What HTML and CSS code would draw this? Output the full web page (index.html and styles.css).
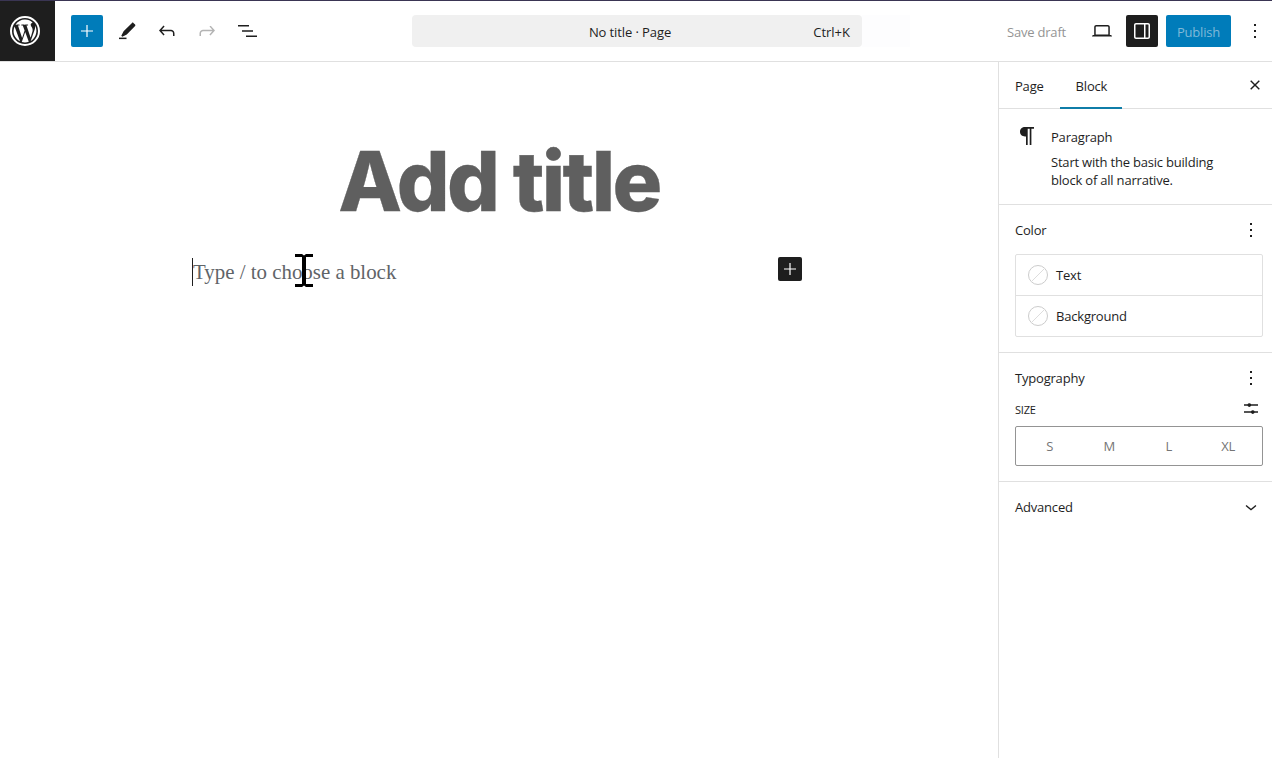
FILE: index.html
```html
<!DOCTYPE html>
<html lang="en">
<head>
    <meta charset="UTF-8">
    <meta name="viewport" content="width=device-width, initial-scale=1.0">
    <title>Add title</title>
    <link rel="stylesheet" href="styles.css">
</head>
<body>
<div class="topline"></div>
<header class="header">
    <a class="wp-logo">
        <svg width="36" height="36" viewBox="0 0 36 36"><circle cx="18" cy="18" r="14" fill="none" stroke="#fff" stroke-width="2"/><path fill="#fff" d="M6.600 18c0 4.500 2.600 8.400 6.400 10.200L7.600 13.400C7 14.800 6.600 16.400 6.600 18zM25.700 17.400c0-1.400-.5-2.400-.9-3.100-.6-.9-1.100-1.700-1.100-2.600 0-1 .8-2 1.900-2h.1C23.700 7.800 21 6.600 18 6.600c-4 0-7.500 2-9.500 5.100h.7c1.200 0 3-.1 3-.1.600 0 .7.900.1.900 0 0-.6.100-1.300.1l4.100 12.300 2.500-7.500-1.800-4.800c-.6 0-1.200-.1-1.200-.1-.6 0-.5-.9.100-.9 0 0 1.900.1 3 .1 1.200 0 3-.1 3-.1.600 0 .7.900.1.900 0 0-.6.100-1.300.1l4.100 12.200 1.100-3.800c.5-1.600.9-2.700.9-3.700zM18.200 19l-3.400 9.900c1 .3 2.100.5 3.200.5 1.300 0 2.600-.2 3.800-.7l-.1-.2L18.200 19zM28 12.600c.1.400.1.800.1 1.200 0 1.200-.2 2.500-.9 4.100l-3.500 10.100c3.400-2 5.700-5.700 5.700-10 0-2-.5-3.800-1.400-5.400z"/></svg>
    </a>
    <div class="tools">
        <button class="icon-btn inserter" type="button">
            <svg width="24" height="24" viewBox="0 0 24 24"><path fill="#fff" d="M11.400 6h1.200v5.400H18v1.200h-5.400V18h-1.200v-5.400H6v-1.200h5.400z"/></svg>
        </button>
        <button class="icon-btn" type="button">
            <svg width="24" height="24" viewBox="0 0 24 24"><path fill="#1e1e1e" d="M20.100 5.600 18.400 3.900c-.4-.4-1-.4-1.400 0L8.600 12.300l-2.300 4.500 1 1 4.500-2.300 8.300-8.500c.4-.4.400-1 0-1.400z"/><rect x="4" y="18.600" width="7.500" height="1.500" fill="#1e1e1e"/></svg>
        </button>
        <button class="icon-btn" type="button">
            <svg width="24" height="24" viewBox="0 0 24 24"><path fill="#1e1e1e" d="M18.300 11.700c-.6-.6-1.400-.9-2.300-.9H6.700l2.900-3.300-1.100-1-4.500 5 4.500 5 1.100-1-2.900-3.300H16c.5 0 .9.200 1.300.5.700.6.700 1.200.7 2.500v1.700h1.500v-1.700c0-1.300 0-2.400-1.200-3.500z"/></svg>
        </button>
        <button class="icon-btn" type="button">
            <svg width="24" height="24" viewBox="0 0 24 24"><path fill="#b4b4b4" d="M15.600 6.500l-1.100 1 2.900 3.300H8c-.9 0-1.700.3-2.300.9-1.200 1.100-1.200 2.200-1.200 3.500v1.700H6v-1.700c0-1.300 0-1.900.7-2.500.4-.3.800-.5 1.300-.5h9.300l-2.900 3.300 1.100 1 4.500-5-4.500-5z"/></svg>
        </button>
        <button class="icon-btn" type="button">
            <svg width="24" height="24" viewBox="0 0 24 24"><path fill="#1e1e1e" d="M3 6h11v1.500H3zM7 11.300h11v1.500H7zM11 16.500h11V18H11z"/></svg>
        </button>
    </div>
    <div class="center">
        <div class="command-bar">
            <span class="command-title">No title · Page</span>
            <span class="command-key">Ctrl+K</span>
        </div>
        <div class="command-ghost"></div>
    </div>
    <div class="actions">
        <span class="save-draft">Save draft</span>
        <button class="icon-btn" type="button">
            <svg width="24" height="24" viewBox="0 0 24 24"><path fill="#1e1e1e" d="M20.500 16h-.7V8c0-1.100-.9-2-2-2H6.200c-1.100 0-2 .9-2 2v8h-.7c-.8 0-1.500.7-1.500 1.500h20c0-.8-.7-1.500-1.500-1.500zM5.700 8c0-.3.200-.5.500-.5h11.600c.3 0 .5.200.5.500v7.600H5.700V8z"/></svg>
        </button>
        <button class="icon-btn dark" type="button">
            <svg width="24" height="24" viewBox="0 0 24 24"><path fill="#fff" d="M18 4H6c-1.100 0-2 .9-2 2v12c0 1.100.9 2 2 2h12c1.100 0 2-.9 2-2V6c0-1.100-.9-2-2-2zM6 18.500c-.3 0-.5-.2-.5-.5V6c0-.3.200-.5.500-.5h8v13H6zM18.500 18c0 .3-.2.500-.5.500h-2.500v-13H18c.3 0 .5.200.5.500v12z"/></svg>
        </button>
        <button class="publish" type="button">Publish</button>
        <button class="icon-btn more" type="button">
            <svg width="24" height="24" viewBox="0 0 24 24"><path fill="#1e1e1e" d="M13 19h-2v-2h2v2zm0-6h-2v-2h2v2zm0-6h-2V5h2v2z"/></svg>
        </button>
    </div>
</header>
<div class="main">
    <main class="editor">
        <h1 class="post-title">Add title</h1>
        <div class="block-row">
            <p class="placeholder">Type / to choose a block</p>
            <button class="block-add" type="button">
                <svg width="24" height="24" viewBox="0 0 24 24"><path fill="#fff" d="M11.400 6h1.200v5.400H18v1.200h-5.400V18h-1.200v-5.400H6v-1.200h5.400z"/></svg>
            </button>
            <svg class="ibeam" width="20" height="33" viewBox="0 0 20 33"><path fill="#000" d="M1 0h7l2 1.500L12 0h7v3h-7v27h7v3h-7l-2-1.500L8 33H1v-3h7V3H1z"/></svg>
        </div>
    </main>
    <aside class="sidebar">
        <div class="tabs">
            <span class="tab">Page</span>
            <span class="tab active">Block</span>
            <svg class="tabs-close" width="24" height="24" viewBox="0 0 24 24"><path fill="#1e1e1e" d="M13 12l3.800-3.800-1-1-3.800 3.800-3.800-3.800-1 1 3.800 3.800-3.800 3.800 1 1 3.800-3.800 3.800 3.800 1-1z"/></svg>
        </div>
        <section class="block-card">
            <svg class="block-icon" width="24" height="24" viewBox="0 0 24 24"><path fill="#1e1e1e" d="M19 3h-9C7.200 3 5 5 5 7.800s2.200 4.700 5 4.700h1V21h1.700V4.800h2V21h1.700V4.800H19z"/></svg>
            <div class="block-text">
                <div class="block-name">Paragraph</div>
                <div class="block-desc">Start with the basic building block of all narrative.</div>
            </div>
        </section>
        <section class="panel color-panel">
            <div class="panel-head">
                <span>Color</span>
                <svg width="24" height="24" viewBox="0 0 24 24"><path fill="#1e1e1e" d="M13 19h-2v-2h2v2zm0-6h-2v-2h2v2zm0-6h-2V5h2v2z"/></svg>
            </div>
            <div class="color-list">
                <div class="color-row">
                    <svg width="22" height="22" viewBox="0 0 22 22"><circle cx="11" cy="11" r="9.500" fill="#fff" stroke="#ccc"/><path d="M4.500 17.500l13-13" stroke="#ddd"/></svg>
                    <span>Text</span>
                </div>
                <div class="color-row">
                    <svg width="22" height="22" viewBox="0 0 22 22"><circle cx="11" cy="11" r="9.500" fill="#fff" stroke="#ccc"/><path d="M4.500 17.500l13-13" stroke="#ddd"/></svg>
                    <span>Background</span>
                </div>
            </div>
        </section>
        <section class="panel type-panel">
            <div class="panel-head">
                <span>Typography</span>
                <svg width="24" height="24" viewBox="0 0 24 24"><path fill="#1e1e1e" d="M13 19h-2v-2h2v2zm0-6h-2v-2h2v2zm0-6h-2V5h2v2z"/></svg>
            </div>
            <div class="size-head">
                <span>SIZE</span>
                <svg width="24" height="24" viewBox="0 0 24 24"><path fill="#1e1e1e" d="M5 7.300h3.500a2 2 0 0 1 3.600 0H19v1.500h-6.900a2 2 0 0 1-3.600 0H5zM5 14.300h7a2 2 0 0 1 3.600 0H19v1.500h-3.400a2 2 0 0 1-3.600 0H5z"/></svg>
            </div>
            <div class="size-toggle">
                <span>S</span><span>M</span><span>L</span><span>XL</span>
            </div>
        </section>
        <section class="panel advanced">
            <span>Advanced</span>
            <svg width="24" height="24" viewBox="0 0 24 24"><path fill="#1e1e1e" d="M16.500 10l-4.500 3.800L7.500 10l-.9 1.100 5.400 4.500 5.400-4.500z"/></svg>
        </section>
    </aside>
</div>
</body>
</html>
```

FILE: styles.css
```css
* { box-sizing: border-box; }
html, body { height: 100%; }
body {
    margin: 0;
    background-color: #fff;
    color: #1e1e1e;
    font-family: "Open Sans", Arial, sans-serif;
    font-size: 13px;
    letter-spacing: -0.2px;
    overflow: hidden;
}
button {
    border: none;
    background: none;
    padding: 0;
    font-family: inherit;
    letter-spacing: inherit;
}
svg { display: block; }

/* Top bar */
.topline {
    height: 1px;
    background-color: #3a3553;
}
.header {
    display: flex;
    align-items: center;
    height: 61px;
    border-bottom: 1px solid #e0e0e0;
}
.wp-logo {
    display: flex;
    align-items: center;
    justify-content: center;
    width: 55px;
    height: 60px;
    padding-right: 5px;
    background-color: #1e1e1e;
}
.tools {
    display: flex;
    align-items: center;
    gap: 8px;
    width: 357px;
    padding-left: 16px;
}
.icon-btn {
    display: flex;
    align-items: center;
    justify-content: center;
    width: 32px;
    height: 32px;
    border-radius: 2px;
}
.inserter { background-color: #007cba; }
.dark { background-color: #1e1e1e; }
.center {
    display: flex;
    width: 500px;
}
.command-bar {
    position: relative;
    display: flex;
    align-items: center;
    justify-content: flex-end;
    width: 450px;
    height: 32px;
    padding: 1px 12px 0 0;
    background-color: #f0f0f0;
    border-radius: 4px;
}
.command-title {
    position: absolute;
    left: 0;
    right: 14px;
    letter-spacing: -0.1px;
    text-align: center;
}
.command-key { letter-spacing: normal; }
.command-ghost {
    width: 48px;
    height: 32px;
    background-color: #fdfdfe;
}
.actions {
    display: flex;
    align-items: center;
    margin-left: auto;
}
.save-draft {
    margin-right: 20px;
    padding-top: 1px;
    color: #949494;
}
.actions .dark { margin-left: 8px; }
.publish {
    width: 65px;
    height: 32px;
    margin-left: 8px;
    padding-top: 1px;
    background-color: #007cba;
    border-radius: 2px;
    color: #7fb9d8;
    font-size: 13px;
}
.more { margin: 0 1px 0 8px; }

/* Editor area */
.main {
    display: flex;
    height: 696px;
}
.editor {
    flex: 1;
    padding-top: 62px;
}
.post-title {
    margin: 0;
    color: #5f5f5f;
    font-family: Inter, sans-serif;
    font-size: 83px;
    font-weight: 800;
    line-height: 115px;
    letter-spacing: -2.7px;
    -webkit-text-stroke: 0.3px #5f5f5f;
    text-align: center;
}
.block-row {
    position: relative;
    display: flex;
    align-items: center;
    justify-content: space-between;
    width: 610px;
    height: 36px;
    margin: 15px 0 0 192px;
}
.placeholder {
    margin: 0;
    color: #5f6468;
    border-left: 1px solid #1e1e1e;
    font-family: "Liberation Serif", serif;
    font-size: 20.9px;
    line-height: 28px;
    letter-spacing: normal;
}
.block-add {
    display: flex;
    align-items: center;
    justify-content: center;
    width: 24px;
    height: 24px;
    margin-top: -7px;
    background-color: #1e1e1e;
    border-radius: 2px;
}
.ibeam {
    position: absolute;
    left: 102px;
    top: 0;
}

/* Settings sidebar */
.sidebar {
    width: 274px;
    border-left: 1px solid #e0e0e0;
}
.tabs {
    display: flex;
    align-items: stretch;
    position: relative;
    height: 47px;
    border-bottom: 1px solid #e0e0e0;
}
.tab {
    display: flex;
    align-items: center;
    padding: 1px 16px 0;
}
.tab.active {
    box-shadow: inset 0 -2px 0 #0f7da8;
    margin-bottom: -1px;
    padding-right: 15px;
}
.tabs-close {
    position: absolute;
    right: 5px;
    top: 11px;
}
.block-card {
    display: flex;
    gap: 12px;
    height: 96px;
    padding: 16px 16px 0;
    border-bottom: 1px solid #e0e0e0;
}
.block-icon { margin-top: -1px; }
.block-name { line-height: 24px; }
.block-desc {
    width: 180px;
    margin-top: 4px;
    line-height: 18px;
}
.panel {
    padding: 0 9px 0 16px;
    border-bottom: 1px solid #e0e0e0;
}
.panel-head {
    display: flex;
    align-items: center;
    justify-content: space-between;
    height: 49px;
}
.color-panel { height: 148px; }
.color-list {
    width: 248px;
    border: 1px solid #e0e0e0;
    border-radius: 2px;
}
.color-row {
    display: flex;
    align-items: center;
    gap: 7px;
    height: 40px;
    padding-left: 11px;
}
.color-row + .color-row {
    height: 41px;
    border-top: 1px solid #e0e0e0;
}
.type-panel { height: 129px; }
.size-head {
    display: flex;
    align-items: center;
    justify-content: space-between;
    height: 24px;
    margin-top: -5px;
    font-size: 11px;
}
.size-toggle {
    display: flex;
    align-items: center;
    width: 248px;
    height: 40px;
    margin-top: 5px;
    padding: 0 4px;
    border: 1px solid #949494;
    border-radius: 2px;
    color: #757575;
}
.size-toggle span {
    flex: 1;
    text-align: center;
}
.advanced {
    display: flex;
    align-items: center;
    justify-content: space-between;
    height: 50px;
    border-bottom: none;
}
```
